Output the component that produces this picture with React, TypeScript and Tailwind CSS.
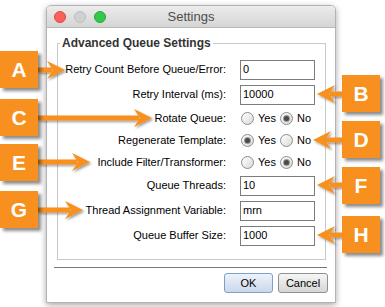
import React from 'react';

const font = { fontFamily: '"Liberation Sans", Arial, sans-serif' };

type Callout = { letter: string; top: number; side: 'left' | 'right' };

const callouts: Callout[] = [
  { letter: 'A', top: 51, side: 'left' },
  { letter: 'C', top: 99, side: 'left' },
  { letter: 'E', top: 144, side: 'left' },
  { letter: 'G', top: 191, side: 'left' },
  { letter: 'B', top: 75, side: 'right' },
  { letter: 'D', top: 121, side: 'right' },
  { letter: 'F', top: 167, side: 'right' },
  { letter: 'H', top: 216, side: 'right' },
];

// arrow: from x (badge edge) to tip x, at y
const arrows = [
  { from: 38, tip: 65, y: 70 },
  { from: 38, tip: 152, y: 118 },
  { from: 38, tip: 90, y: 162 },
  { from: 38, tip: 83, y: 210 },
  { from: 342, tip: 317, y: 94 },
  { from: 342, tip: 313, y: 140 },
  { from: 342, tip: 317, y: 185 },
  { from: 342, tip: 317, y: 235 },
];

const Field = ({ value }: { value: string }) => (
  <div className="flex h-[20px] w-[75px] items-center border border-[#7c7c7c] bg-white pl-[2px] text-[11px] text-black">
    {value}
  </div>
);

const Radio = ({ checked, label }: { checked: boolean; label: string }) => (
  <div className="flex items-center gap-[4px]">
    <span className="flex size-[13px] items-center justify-center rounded-full border border-[#8d8d8d] bg-gradient-to-br from-[#ffffff] to-[#d9d9d9]">
      {checked && <span className="size-[5px] rounded-full bg-[#4a4a4a] ring-1 ring-[#9a9a9a]" />}
    </span>
    <span className="text-[11px] text-black">{label}</span>
  </div>
);

const RadioPair = ({ yes }: { yes: boolean }) => (
  <div className="flex items-center pl-[1px]">
    <div className="w-[39px]">
      <Radio checked={yes} label="Yes" />
    </div>
    <Radio checked={!yes} label="No" />
  </div>
);

const Label = ({ children }: { children: React.ReactNode }) => (
  <span className="text-right text-[11px] text-black">{children}</span>
);

export default function App() {
  return (
    <div className="relative h-[307px] w-[385px] overflow-hidden bg-white" style={font}>
      {/* Dialog window */}
      <div className="ml-[46px] mt-[5px] flex w-[290px] flex-col rounded-t-[5px] border border-[#b3b3b3] bg-white shadow-[0_2px_6px_rgba(0,0,0,0.35)]">
        {/* Title bar */}
        <div className="relative flex h-[22px] items-center rounded-t-[4px] border-b border-[#b9b9b9] bg-gradient-to-b from-[#ececec] to-[#d5d5d5]">
          <div className="flex items-center gap-[8px] pl-[7px]">
            <span className="size-[12px] rounded-full border border-[#e2463f] bg-[#fc605c]" />
            <span className="size-[12px] rounded-full border border-[#bcbcbc] bg-[#d0d0d0]" />
            <span className="size-[12px] rounded-full border border-[#2aa53b] bg-[#34c84a]" />
          </div>
          <span className="absolute inset-x-0 text-center text-[13px] text-[#4d4d4d]">Settings</span>
        </div>

        {/* Body */}
        <div className="flex flex-col pt-[6px]">
          <fieldset className="ml-[10px] mr-[9px] border border-[#c9c9c9] pb-[11px] pt-[5px]">
            <legend className="ml-[2px] px-[2px] text-[12px] font-bold text-[#333]">
              Advanced Queue Settings
            </legend>
            <div className="grid grid-cols-[168px_75px] items-center gap-x-[14px]">
              <div className="col-span-2 grid h-[25px] grid-cols-subgrid items-center">
                <Label>Retry Count Before Queue/Error:</Label>
                <Field value="0" />
              </div>
              <div className="col-span-2 grid h-[25px] grid-cols-subgrid items-center">
                <Label>Retry Interval (ms):</Label>
                <Field value="10000" />
              </div>
              <div className="col-span-2 grid h-[22px] grid-cols-subgrid items-center">
                <Label>Rotate Queue:</Label>
                <RadioPair yes={false} />
              </div>
              <div className="col-span-2 grid h-[22px] grid-cols-subgrid items-center">
                <Label>Regenerate Template:</Label>
                <RadioPair yes={true} />
              </div>
              <div className="col-span-2 grid h-[22px] grid-cols-subgrid items-center">
                <Label>Include Filter/Transformer:</Label>
                <RadioPair yes={false} />
              </div>
              <div className="col-span-2 grid h-[25px] grid-cols-subgrid items-center">
                <Label>Queue Threads:</Label>
                <Field value="10" />
              </div>
              <div className="col-span-2 grid h-[25px] grid-cols-subgrid items-center">
                <Label>Thread Assignment Variable:</Label>
                <Field value="mrn" />
              </div>
              <div className="col-span-2 grid h-[25px] grid-cols-subgrid items-center">
                <Label>Queue Buffer Size:</Label>
                <Field value="1000" />
              </div>
            </div>
          </fieldset>

          <div className="ml-[7px] mr-[8px] mt-[7px] h-px bg-[#777]" />

          <div className="mb-[9px] mr-[7px] mt-[5px] flex justify-end gap-[5px]">
            <button className="h-[20px] w-[49px] rounded-[3px] border border-[#7fa0c8] bg-gradient-to-b from-[#eef3fa] to-[#c9d8ea] text-[11px] text-black">
              OK
            </button>
            <button className="h-[20px] w-[50px] rounded-[3px] border border-[#8f8f8f] bg-gradient-to-b from-[#f6f6f6] to-[#d6d6d6] text-[11px] text-black">
              Cancel
            </button>
          </div>
        </div>
      </div>

      {/* Callout arrows */}
      <svg className="pointer-events-none absolute left-0 top-0" width="385" height="307">
        <defs>
          <filter id="sh" x="-20%" y="-50%" width="140%" height="200%">
            <feDropShadow dx="1.5" dy="1.5" stdDeviation="1" floodColor="#000" floodOpacity="0.4" />
          </filter>
        </defs>
        {arrows.map((a, i) => {
          const dir = a.tip > a.from ? 1 : -1;
          const base = a.tip - dir * 13;
          return (
            <g key={i} fill="#f7901e" filter="url(#sh)">
              <rect x={Math.min(a.from, base)} y={a.y - 2.5} width={Math.abs(base - a.from)} height={5} />
              <polygon
                points={`${a.tip},${a.y} ${a.tip - dir * 18},${a.y - 9} ${a.tip - dir * 12},${a.y} ${a.tip - dir * 18},${a.y + 9}`}
              />
            </g>
          );
        })}
      </svg>

      {/* Callout badges */}
      {callouts.map((c) => (
        <div
          key={c.letter}
          className={`absolute flex h-[37px] w-[38px] items-center justify-center bg-[#f7901e] text-[21px] font-bold text-white shadow-[3px_3px_3px_rgba(0,0,0,0.45)] ${
            c.side === 'left' ? 'left-0' : 'left-[342px]'
          }`}
          style={{ top: c.top }}
        >
          {c.letter}
        </div>
      ))}
    </div>
  );
}
